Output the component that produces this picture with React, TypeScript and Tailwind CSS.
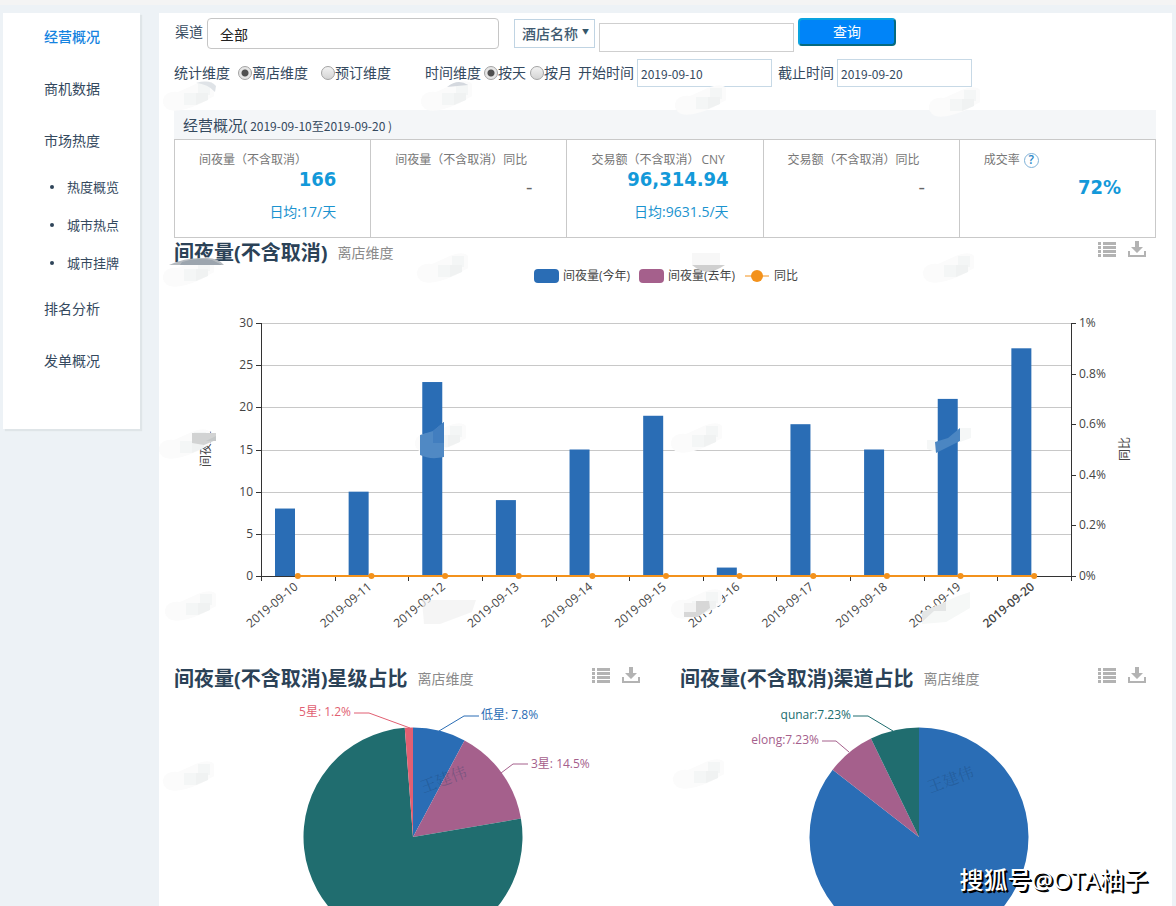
import React from 'react';

const BLUE = '#2a6db5';
const PURPLE = '#a5608c';
const GREEN = '#206d6f';
const RED = '#e15f72';
const ORANGE = '#f3921c';

const nights = [
  { date: '2019-09-10', value: 8 },
  { date: '2019-09-11', value: 10 },
  { date: '2019-09-12', value: 23 },
  { date: '2019-09-13', value: 9 },
  { date: '2019-09-14', value: 15 },
  { date: '2019-09-15', value: 19 },
  { date: '2019-09-16', value: 1 },
  { date: '2019-09-17', value: 18 },
  { date: '2019-09-18', value: 15 },
  { date: '2019-09-19', value: 21 },
  { date: '2019-09-20', value: 27 },
];

const Sidebar: React.FC = () => (
  <nav className="w-[137px] shrink-0 self-start bg-white pt-3 pb-14 pl-[41px] text-sm leading-6 shadow-[2px_2px_1px_#dfe5e8]">
    <ul className="flex flex-col gap-7">
      <li><a href="#overview" className="font-medium text-[#1583e0]">经营概况</a></li>
      <li><a href="#business">商机数据</a></li>
      <li><a href="#market">市场热度</a></li>
      <li className="-my-[13px]">
        <ul className="text-[13px]">
          {['热度概览', '城市热点', '城市挂牌'].map((name) => (
            <li key={name} className="flex h-[38px] items-center gap-[13px] pl-[6px]">
              <span className="size-1 rounded-full bg-[#2f4459]"></span>
              <a href="#market">{name}</a>
            </li>
          ))}
        </ul>
      </li>
      <li><a href="#rank">排名分析</a></li>
      <li><a href="#orders">发单概况</a></li>
    </ul>
  </nav>
);

interface RadioProps {
  name: string;
  label: string;
  checked?: boolean;
}

const Radio: React.FC<RadioProps> = ({ name, label, checked }) => (
  <label className="flex items-center">
    <input
      type="radio"
      name={name}
      defaultChecked={checked}
      className="size-[14px] appearance-none rounded-full border border-[#a3a3a3] bg-linear-to-b from-[#f2f2f2] to-[#d4d4d4] checked:bg-[radial-gradient(circle,#505050_0_3px,#e6e6e6_4px)]"
    />
    {label}
  </label>
);

const Filters: React.FC = () => (
  <form className="text-sm" onSubmit={(e) => e.preventDefault()}>
    <div className="flex items-start pl-px">
      <label htmlFor="channel" className="mr-1 leading-7">渠道</label>
      <input id="channel" defaultValue="全部" className="h-[31px] w-[292px] rounded-[4px] border border-[#c6c6c6] px-3 text-[#222]" />
      <div className="relative ml-[15px]">
        <select aria-label="酒店名称" className="mt-px h-[29px] w-[81px] appearance-none border border-[#c0d4e3] bg-white pl-[7px] font-medium text-[#3f5a70]">
          <option>酒店名称</option>
        </select>
        <span className="pointer-events-none absolute top-[6px] right-[6px] text-[7px] leading-4 text-[#35566a]">▼</span>
      </div>
      <input aria-label="酒店" className="mt-[5px] ml-1 h-[29px] w-[195px] border border-[#cfcfcf] px-2" />
      <button className="ml-1 h-7 w-[98px] rounded-[4px] border-2 border-t-[#0aa3e0] border-r-[#056a80] border-b-[#056a80] border-l-[#0aa3e0] bg-[#0084f8] leading-5 text-white">查询</button>
    </div>
    <div className="mt-[7px] flex h-7 items-center">
      <span className="mr-2">统计维度</span>
      <div className="flex gap-[13px]">
        <Radio name="stat" label="离店维度" checked />
        <Radio name="stat" label="预订维度" />
      </div>
      <span className="mr-[3px] ml-[34px]">时间维度</span>
      <div className="flex gap-1">
        <Radio name="time" label="按天" checked />
        <Radio name="time" label="按月" />
      </div>
      <label className="ml-[6px] flex items-center gap-[3px]">
        开始时间
        <input defaultValue="2019-09-10" className="h-7 w-[135px] border border-[#c7d9e6] px-[3px] font-['Noto_Sans_CJK_SC',sans-serif] text-xs" />
      </label>
      <label className="ml-[6px] flex items-center gap-[3px]">
        截止时间
        <input defaultValue="2019-09-20" className="h-7 w-[135px] border border-[#c7d9e6] px-[3px] font-['Noto_Sans_CJK_SC',sans-serif] text-xs" />
      </label>
    </div>
  </form>
);

interface MetricProps {
  title: React.ReactNode;
  value?: string;
  average?: string;
}

const Metric: React.FC<MetricProps> = ({ title, value, average }) => (
  <div className="h-[97px] flex-1 border-r border-[#c9c9c9] pt-3 pr-[34px] pl-6">
    <h3 className="flex h-4 items-center text-xs leading-4 whitespace-nowrap text-[#777]">{title}</h3>
    <div className={average ? 'text-right' : 'mt-2 text-right'}>
      {value ? (
        <p className="font-['DejaVu_Sans_Condensed','DejaVu_Sans'] text-xl leading-[22px] font-bold text-[#1399d9]">{value}</p>
      ) : (
        <p className="text-xl leading-[22px] text-[#666]">-</p>
      )}
      {average && <p className="mt-3 text-sm leading-5 text-[#1b93cf]">{average}</p>}
    </div>
  </div>
);

const Summary: React.FC = () => (
  <section className="mt-[23px]">
    <h2 className="h-[29px] bg-[#f4f6f8] pl-[9px] text-[15px] leading-[30px]">
      经营概况(<span className="font-['Noto_Sans_CJK_SC',sans-serif] text-xs"> 2019-09-10至2019-09-20 )</span>
    </h2>
    <div className="flex border-y border-l border-[#c9c9c9]">
      <Metric title="间夜量（不含取消）" value="166" average="日均:17/天" />
      <Metric title="间夜量（不含取消）同比" />
      <Metric title={<>交易额（不含取消）<span className="ml-[2px]">CNY</span></>} value="96,314.94" average="日均:9631.5/天" />
      <Metric title="交易额（不含取消）同比" />
      <Metric
        title={<>成交率<span className="ml-1 flex size-[15px] items-center justify-center rounded-full border border-[#7fb2d8] font-semibold text-[#2a86c8]">?</span></>}
        value="72%"
      />
    </div>
  </section>
);

const ChartHeading: React.FC<{ title: string }> = ({ title }) => (
  <div className="flex h-[30px] items-center pr-[10px]">
    <h2 className="text-xl font-bold text-[#2b4257]">{title}</h2>
    <span className="ml-[10px] text-sm text-[#8a8a8a]">离店维度</span>
    <div className="mb-[6px] ml-auto flex gap-3">
      <button aria-label="列表">
        <svg className="size-[18px]" viewBox="0 0 18 18" fill="#b3b3b3">
          {[1, 5, 9, 13].map((y) => (
            <path key={y} d={`M0 ${y}h3v3H0zM5 ${y}h13v3H5z`} />
          ))}
        </svg>
      </button>
      <button aria-label="下载">
        <svg className="size-[18px]" viewBox="0 0 18 18" fill="#b3b3b3">
          <path d="M7 0h4v6h4l-6 6-6-6h4zM0 10h2v4h14v-4h2v6H0z" />
        </svg>
      </button>
    </div>
  </div>
);

const BarChart: React.FC = () => {
  const left = 87;
  const right = 897;
  const top = 55;
  const bottom = 308;
  const step = (right - left) / nights.length;
  const scale = (bottom - top) / 30;
  return (
    <svg className="block w-full" viewBox="0 0 982 396" fontSize="12" fill="#444">
      <rect x="360" y="1" width="25" height="14" rx="4" fill={BLUE} />
      <text x="389" y="12">间夜量(今年)</text>
      <rect x="465" y="1" width="25" height="14" rx="4" fill={PURPLE} />
      <text x="494" y="12">间夜量(去年)</text>
      <path d="M571 8h24" stroke={ORANGE} />
      <circle cx="583" cy="8" r="6" fill={ORANGE} />
      <text x="600" y="12">同比</text>

      {[0, 5, 10, 15, 20, 25, 30].map((n) => {
        const y = Math.round(bottom - n * scale) + 0.5;
        return (
          <g key={n}>
            <path d={`M${left} ${y}H${right}`} stroke="#c8c8c8" />
            <path d={`M${left - 5} ${y}h5`} stroke="#333" />
            <text x={left - 8} y={y + 3} textAnchor="end">{n}</text>
          </g>
        );
      })}
      {['0%', '0.2%', '0.4%', '0.6%', '0.8%', '1%'].map((label, i) => {
        const y = Math.round(bottom - (i * (bottom - top)) / 5) + 0.5;
        return (
          <g key={label}>
            <path d={`M${right} ${y}h5`} stroke="#333" />
            <text x={right + 8} y={y + 3}>{label}</text>
          </g>
        );
      })}
      <path d={`M${left + 0.5} ${top}V${bottom + 5}M${right + 0.5} ${top}V${bottom + 5}M${left} ${bottom + 0.5}H${right}`} stroke="#333" />
      <text transform="translate(36 199) rotate(-90)">间夜量</text>
      <text transform="translate(955 193) rotate(-90)">同比</text>

      {nights.map(({ date, value }, i) => {
        const x = left + i * step;
        return (
          <g key={date}>
            <path d={`M${Math.round(x) + 0.5} ${bottom}v5`} stroke="#333" />
            <rect x={x + 14} y={bottom - value * scale} width="20" height={value * scale} fill={BLUE} />
            <text
              transform={`translate(${x + step / 2 + 1} ${bottom + 12}) rotate(-40)`}
              textAnchor="end"
              fontWeight={i === nights.length - 1 ? 600 : 400}
            >
              {date}
            </text>
          </g>
        );
      })}
      <path d={`M${left + step / 2} ${bottom}H${right - step / 2}`} stroke={ORANGE} strokeWidth="2" />
      {nights.map(({ date }, i) => (
        <circle key={date} cx={left + (i + 0.5) * step} cy={bottom} r="3" fill={ORANGE} />
      ))}
    </svg>
  );
};

interface Slice {
  label: string;
  percent: number;
  color: string;
  line?: string;
  x?: number;
  y?: number;
  anchor?: 'start' | 'end';
}

const starSlices: Slice[] = [
  { label: '低星: 7.8%', percent: 7.8, color: BLUE, line: 'M265 37L290 22h15', x: 307, y: 25 },
  { label: '3星: 14.5%', percent: 14.5, color: PURPLE, line: 'M327 79L339 70h15', x: 357, y: 74 },
  { label: '4星', percent: 76.5, color: GREEN },
  { label: '5星: 1.2%', percent: 1.2, color: RED, line: 'M236 34L195 19h-15', x: 177, y: 22, anchor: 'end' },
];

const channelSlices: Slice[] = [
  { label: 'ctrip', percent: 85.54, color: BLUE },
  { label: 'elong:7.23%', percent: 7.23, color: PURPLE, line: 'M169 58L156 47h-14', x: 139, y: 50, anchor: 'end' },
  { label: 'qunar:7.23%', percent: 7.23, color: GREEN, line: 'M213 37L188 22h-15', x: 171, y: 25, anchor: 'end' },
];

const PieChart: React.FC<{ slices: Slice[] }> = ({ slices }) => {
  const cx = 239;
  const cy = 143;
  const r = 109.5;
  const point = (percent: number) => {
    const angle = (percent / 100) * Math.PI * 2;
    return `${cx + r * Math.sin(angle)} ${cy - r * Math.cos(angle)}`;
  };
  let start = 0;
  return (
    <svg className="block w-full" viewBox="0 0 476 270" fontSize="12">
      {slices.map((s) => {
        const from = start;
        start += s.percent;
        return (
          <g key={s.label}>
            <path d={`M${cx} ${cy}L${point(from)}A${r} ${r} 0 ${s.percent > 50 ? 1 : 0} 1 ${point(start)}Z`} fill={s.color} />
            {s.line && <path d={s.line} fill="none" stroke={s.color} />}
            {s.line && <text x={s.x} y={s.y} textAnchor={s.anchor} fill={s.color}>{s.label}</text>}
          </g>
        );
      })}
    </svg>
  );
};

const patches = [
  [164, 82], [422, 82], [676, 86], [930, 88],
  [164, 258], [418, 254], [924, 254],
  [160, 430], [416, 424], [672, 424],
  [166, 592], [672, 590],
  [164, 762], [674, 760],
];

const Watermarks: React.FC = () => (
  <svg className="pointer-events-none absolute top-0 left-0 h-[906px] w-[1176px]" viewBox="0 0 1176 906">
    {patches.map(([x, y]) => (
      <g key={`${x}-${y}`} transform={`translate(${x} ${y})`}>
        <path d="M0 15Q4 9 14 10L34 1Q46-3 50 2V14L36 22Q10 33 2 26Q-3 21 0 15Z" fill="#fbfbfb" />
        <path d="M20 11h12v12H20zM34 2h12v11H34z" fill="#f4f6f6" />
        <path d="M32 11h12v7l-12 5z" fill="#f0f2f2" />
      </g>
    ))}
    <path d="M196 83Q210 79 216 86L215 92Q208 84 196 83Z" fill="#dfe3e7" />
    <path d="M447 87Q458 78 468 85Z" fill="#d4d8de" />
    <path d="M169 265Q185 257 207 258Q218 258 224 265Z" fill="#b5babf" />
    <path d="M180 265L182 262Q196 257 212 260L222 265Z" fill="#9ca5ae" />
    <path d="M692 265h33q-9 6-17 7-9-1-16-7z" fill="#cfcfcf" />
    <path d="M692 253h28v12h-28z" fill="#f7f7f7" />
    <path d="M192 433h24v7l-12 5-12-2z" fill="#d2d3d3" />
    <path d="M206 441h10v-5z" fill="#c5c8c9" />
    <path d="M420 435L433 431L444 422V457Q430 460 420 455Z" fill="#5089c4" />
    <path d="M433 431L444 422V443H433Z" fill="#427ebf" />
    <path d="M927 440h9v12l-9-3zM960 428h11v10l-11 4z" fill="#f5f7f7" />
    <path d="M935 442L948 438L960 428V441L936 453Z" fill="#4b86c2" />
    <path d="M422 600h54l-4 12-32 12h-16z" fill="#f1f1f1" fillOpacity="0.7" />
    <path d="M684 603h12v10l-12 4z" fill="#f3f3f3" />
    <path d="M696 601h13l1 7-12 9h-14v-5h12z" fill="#d7d7d7" />
    <path d="M922 612L958 596L970 592V608L946 622L922 624Z" fill="#f6f8f7" />
    <path d="M922 612L946 602V611H934L922 622Z" fill="#e4e6e6" />
    <g fontSize="16" fill="#183c65" fillOpacity="0.3" className="font-['Noto_Serif_CJK_SC','Noto_Sans_CJK_SC',serif]">
      <text transform="translate(423 793) rotate(-20)">王建伟</text>
      <text transform="translate(930 793) rotate(-20)">王建伟</text>
    </g>
  </svg>
);

const App: React.FC = () => (
  <div className="relative h-screen overflow-hidden border-t-[5px] border-[#f4f4f4] bg-[#edf2f6] font-['Open_Sans','Noto_Sans_CJK_SC',sans-serif] text-[#34495e]">
    <div className="flex gap-[19px] pt-2 pr-1 pl-[3px]">
      <Sidebar />
      <main className="min-w-0 flex-1 bg-white pt-[5px] pr-4 pl-[15px]">
        <Filters />
        <Summary />
        <section>
          <ChartHeading title="间夜量(不含取消)" />
          <BarChart />
        </section>
        <div className="grid grid-cols-2 gap-[30px]">
          <section>
            <ChartHeading title="间夜量(不含取消)星级占比" />
            <PieChart slices={starSlices} />
          </section>
          <section>
            <ChartHeading title="间夜量(不含取消)渠道占比" />
            <PieChart slices={channelSlices} />
          </section>
        </div>
      </main>
    </div>
    <div className="absolute -top-[5px] left-0">
      <Watermarks />
    </div>
    <p className="absolute right-7 bottom-2 text-2xl leading-9 text-white [text-shadow:1px_1px_0_#000,2px_2px_0_#000]">
      <span className="font-medium">搜狐号</span>@OTA柚子
    </p>
  </div>
);

export default App;
